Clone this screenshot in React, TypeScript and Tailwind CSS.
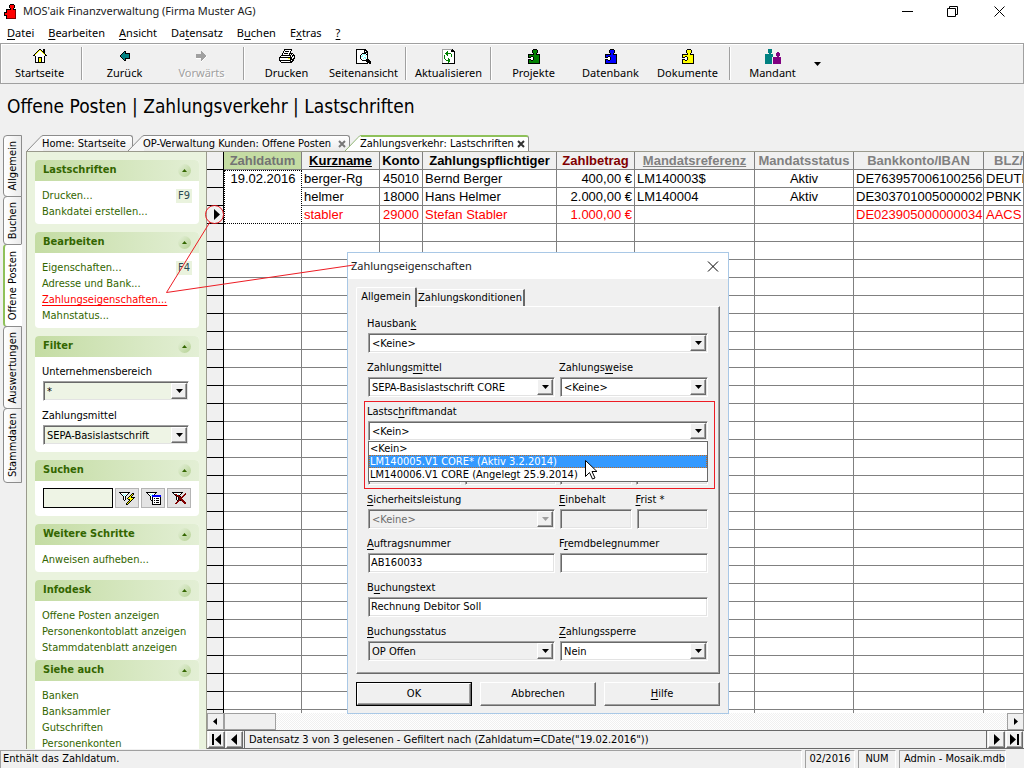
import React from 'react';

const sunken = 'border border-t-[#a0a0a0] border-l-[#a0a0a0] border-r-white border-b-white p-px shadow-[inset_1px_1px_0_#696969,inset_-1px_-1px_0_#e3e3e3]';
const raised = 'border border-t-white border-l-white border-r-[#696969] border-b-[#696969] bg-[#f0f0f0] shadow-[inset_-1px_-1px_0_#a0a0a0]';
const segoe = "font-['Noto_Sans','Open_Sans',sans-serif]";

const colors: Record<string, string> = {
    k: '#000000', w: '#ffffff', g: '#008000', b: '#0000ff', y: '#ffff00', r: '#ff0000', d: '#800000',
    t: '#008080', p: '#800080', c: '#7fffff', s: '#a0a0a0', n: '#000080',
};

function PixelIcon({ rows, fill }: { rows: string[]; fill?: string }) {
    return (
        <svg width={rows[0].length} height={rows.length} shapeRendering="crispEdges" aria-hidden="true" className="shrink-0">
            {rows.map((row, y) =>
                row.split('').map((c, x) =>
                    c === '.' ? null : <rect key={`${x}-${y}`} x={x} y={y} width="1" height="1" fill={c === 'x' ? fill : colors[c]} />
                )
            )}
        </svg>
    );
}

const puzzle = [
    '.....kkkk...',
    '....kxxxxk..',
    '....kxxxxk..',
    '....kxxxxk..',
    '.....kxxk...',
    'kkkkkkxxkkkk',
    'kxxxxxxxxxxk',
    'kxxkkxxxxxxk',
    'kkkwwkxxxxxk',
    '..wwwkxxxxxk',
    'kkkwwkxxxxxk',
    'kxxkkxxxxxxk',
    'kxxxxxxxxxxk',
    'kxxxxxxxxxxk',
    'kkkkkkkkkkkk',
];

const logo = [
    '......kkkk..',
    '.....krrrrk.',
    '.....krrrrk.',
    '.....krrrrk.',
    '......krrk..',
    '..kkkkkrrkkk',
    '..krrrrrrrrd',
    '..krrrrrrrrd',
    'kkkrrrrrrrrd',
    'krrrrrrrrrrd',
    'krrrrrrrrrrd',
    'kkkrrrrrrrrd',
    '..krrrrrrrrd',
    '..krrrrrrrrd',
    '..kddddddddd',
];

const house = [
    '......kk..kk..',
    '.....kyyk.kk..',
    '....kywwykkk..',
    '...kywwwwykk..',
    '..kywwwwwwyk..',
    '.kywwwwwwwwyk.',
    'kkwwwwwwwwwwkk',
    '..kwwwwwwwwk..',
    '..kwwkkkkwwk..',
    '..kwwkyykwwk..',
    '..kwwkyykwwk..',
    '..kwwkyykwwk..',
    '..kwwkyykwwk..',
    '..kkkkkkkkkk..',
];

const arrowLeft = [
    '....kk....',
    '...ktk....',
    '..kttkkkkk',
    '.ktttttttk',
    'kttttttttk',
    'kttttttttk',
    '.ktttttttk',
    '..kttkkkkk',
    '...ktk....',
    '....kk....',
];

const arrowRight = [
    '.....s.....',
    '.....ss....',
    '.....sss...',
    'sssssssss..',
    'ssssssssss.',
    'ssssssssssw',
    'sssssssssw.',
    'wwwwwsssw..',
    '.....ssw...',
    '.....sw....',
    '.....w.....',
];

const printer = [
    '.....kkkkkkkk...',
    '.....kwwwwwwk...',
    '....kwkkkkwk....',
    '....kwwwwwwk....',
    '...kwkkkkwkkkk..',
    '...kwwwwwwk.kwk.',
    '..kkkkkkkkkkwkkk',
    '.kwwwwwwwwwkwkwk',
    'kkkkkkkkkkkkkwwk',
    'kwwwwwwwwyykkwkk',
    'kwwwwwwwwwwkkkk.',
    'kkkkkkkkkkkkwkk.',
    '.kwwwwwwwwwkkk..',
    '..kkkkkkkkkkk...',
];

const preview = [
    'kkkkkkkkkk......',
    'kwwwwwwwkkk.....',
    'kwwwwwwwkwkk....',
    'kwwwwwwwkkkk....',
    'kwwwwwkkkkwk....',
    'kwwwwkwccwkk....',
    'kwwwkwcwwcwk....',
    'kwwwkccwwwwk....',
    'kwwwkwwwccwk....',
    'kwwwkwwcwcwk....',
    'kwwwwkwwwwkkk...',
    'kwwwwwkkkkkkkk..',
    'kwwwwwwwwwkkkkk.',
    'kwwwwwwwwwwkkkk.',
    'kkkkkkkkkkkk.kk.',
];

const refresh = [
    'ssssssssssk..',
    'swwwwwwwwkkk.',
    'swwwwgwwwkkkk',
    'swwwggwwwwwwk',
    'swwggggggwwwk',
    'swwwggwwwgwwk',
    'swgwwgwwwgwwk',
    'swgwwwwwwgwwk',
    'swgwwwwwwwwwk',
    'swgwwwgwwwwwk',
    'swwgwwggwwwwk',
    'swwwggggwwwwk',
    'swwwwwggwwwwk',
    'swwwwwgwwwwwk',
    'kkkkkkkkkkkkk',
];

const people = [
    '...tttt.........',
    '...tttt.........',
    '...tttt.........',
    '...tttt.....pp..',
    '....tt.....pppp.',
    'tttttttt...pppp.',
    'tttttttt...pppp.',
    'tttttttt....pp..',
    'ttttttt.pppppppp',
    'ttttttt.pppppppp',
    'ttttttt.pppppppp',
    'ttttttt.pppppppp',
    'ttttttt.pppppppp',
    'ttttttt.pppppppp',
    'ttttttt.pppppppp',
];

const filterRun = [
    'kkkkkkkkkkk.....',
    '.kwwwwwwwk...kk.',
    '..kwcwcwk...kyk.',
    '...kwcwk...kyk..',
    '....kwk...kyk...',
    '....kwk..kyykkkk',
    '....kwk.kyyyyyk.',
    '....kwk..kkyyk..',
    '.....k....kyk...',
    '.........kyk....',
    '........kyk.....',
    '.......kyk......',
    '.......kk.......',
];

const filterForm = [
    'kkkkkkkkkkk....',
    '.kwwwwwwwk.....',
    '..kwcwcwk......',
    '...kwcbbbbbbbbb',
    '....kwbbbbbbbbb',
    '....kwkwwwwwwwk',
    '....kwkwkwkkkwk',
    '....kwkwwwwwwwk',
    '.....kkwkwkkkwk',
    '......kwwwwwwwk',
    '......kwkwkkkwk',
    '......kwwwwwwwk',
    '......kkkkkkkkk',
];

const filterClear = [
    'kkkkkkkkkkk....',
    '.kwwwwwwwk...d.',
    '..kddwcwk...dd.',
    '...kdddk...dd..',
    '....kdddk.dd...',
    '....kwkdddd....',
    '....kwkddd.....',
    '....kwkdddd....',
    '.....kddkddd...',
    '.....dd...ddd..',
    '....dd.....ddd.',
    '...dd.......dd.',
];

/* '&' marks the access key of a caption */
function Caption({ text }: { text: string }) {
    const i = text.indexOf('&');
    if (i < 0) return <>{text}</>;
    return <>{text.slice(0, i)}<u className="underline-offset-2">{text[i + 1]}</u>{text.slice(i + 2)}</>;
}

interface FieldProps {
    id: string;
    label: string;
    value?: string;
    className?: string;
    tone?: string;
    disabled?: boolean;
    combo?: boolean;
}

function Field({ id, label, value = '', className = '', tone = 'bg-white', disabled, combo }: FieldProps) {
    return (
        <div className={`flex min-w-0 flex-col ${className}`}>
            <label htmlFor={id} className="h-[17px] leading-4 whitespace-nowrap"><Caption text={label} /></label>
            <div className={`ml-px flex h-5 ${sunken} ${disabled ? 'bg-[#f0f0f0] text-[#6d6d6d]' : tone}`}>
                {combo ? (
                    <>
                        <select id={id} disabled={disabled} defaultValue={value} className="min-w-0 flex-1 appearance-none bg-transparent pt-[2px] pl-[2px] leading-[14px] outline-none">
                            <option>{value}</option>
                        </select>
                        <span className={`pointer-events-none flex w-4 shrink-0 items-center justify-center ${raised}`}>
                            <svg width="7" height="4" aria-hidden="true"><path d="M0 0h7L3.5 4z" fill={disabled ? '#a0a0a0' : '#000'} /></svg>
                        </span>
                    </>
                ) : (
                    <input id={id} disabled={disabled} defaultValue={value} className="w-full min-w-0 bg-transparent px-px outline-none" />
                )}
            </div>
        </div>
    );
}

const menuItems = ['&Datei', '&Bearbeiten', '&Ansicht', 'Da&tensatz', 'B&uchen', 'E&xtras', '&?'];

interface Tool {
    label: string;
    rows: string[];
    fill?: string;
    disabled?: boolean;
}

const toolGroups: Tool[][] = [
    [{ label: 'Startseite', rows: house }],
    [{ label: 'Zurück', rows: arrowLeft }, { label: 'Vorwärts', rows: arrowRight, disabled: true }],
    [{ label: 'Drucken', rows: printer }, { label: 'Seitenansicht', rows: preview }],
    [{ label: 'Aktualisieren', rows: refresh }],
    [
        { label: 'Projekte', rows: puzzle, fill: '#008000' },
        { label: 'Datenbank', rows: puzzle, fill: '#0000ff' },
        { label: 'Dokumente', rows: puzzle, fill: '#ffff00' },
    ],
    [{ label: 'Mandant', rows: people }],
];

function Toolbar() {
    return (
        <div className={`flex h-[41px] shrink-0 items-stretch border border-[#a0a0a0] shadow-[inset_1px_1px_0_#fff] ${segoe}`}>
            {toolGroups.map((group, i) => (
                <React.Fragment key={i}>
                    {i > 0 && (
                        <div className="my-[3px] flex w-2 shrink-0 justify-center">
                            <span className="w-[2px] border-r border-l border-l-[#a0a0a0] border-r-white" />
                        </div>
                    )}
                    {group.map(tool => (
                        <button key={tool.label} disabled={tool.disabled} className="flex w-[77px] shrink-0 flex-col items-center pt-1 text-[11px] text-black disabled:text-[#a0a0a0] disabled:[text-shadow:1px_1px_0_#fff]">
                            <span className="flex h-4 items-center"><PixelIcon rows={tool.rows} fill={tool.fill} /></span>
                            <span className="leading-[18px]">{tool.label}</span>
                        </button>
                    ))}
                </React.Fragment>
            ))}
            <button aria-label="Mandant wählen" className="flex w-3 items-center justify-center">
                <svg width="7" height="4"><path d="M0 0h7L3.5 4z" /></svg>
            </button>
        </div>
    );
}

function TitleBar() {
    return (
        <header className="flex h-[23px] shrink-0 items-center bg-white pl-1">
            <PixelIcon rows={logo} />
            <h1 className={`ml-[7px] text-[11px] text-[#222] ${segoe}`}>MOS'aik Finanzverwaltung (Firma Muster AG)</h1>
            <div className="ml-auto flex h-full items-center pb-px">
                <button aria-label="Minimieren" className="flex w-[45px] justify-center"><svg width="11" height="11"><path d="M0 5.5h11" stroke="#000" /></svg></button>
                <button aria-label="Wiederherstellen" className="flex w-[45px] justify-center">
                    <svg width="11" height="11" fill="none" stroke="#000"><path d="M.5 2.5h8v8h-8zM2.5 2.5v-2h8v8h-2" /></svg>
                </button>
                <button aria-label="Schließen" className="flex w-[49px] justify-center"><svg width="11" height="11"><path d="M.5.5l10 10M10.5.5l-10 10" stroke="#000" /></svg></button>
            </div>
        </header>
    );
}

const sideTabs = [
    { label: 'Allgemein', size: 'h-[62px]' },
    { label: 'Buchen', size: 'h-[49px]' },
    { label: 'Offene Posten', size: 'h-[83px]', active: true },
    { label: 'Auswertungen', size: 'h-[83px]' },
    { label: 'Stammdaten', size: 'h-[75px]' },
];

function SideTabs() {
    return (
        <nav className="flex w-[26px] shrink-0 flex-col pl-[3px]">
            {sideTabs.map(tab => (
                <button
                    key={tab.label}
                    className={`-mb-px flex w-[19px] items-center justify-center rounded-l-[4px] border border-[#8c8c8c] ${tab.size} ${tab.active ? 'border-l-2 border-l-[#8fc15a] border-r-white bg-white' : 'bg-linear-to-r from-white to-[#ebebeb]'}`}
                >
                    <span className="rotate-180 text-[11px] leading-4 whitespace-nowrap [writing-mode:vertical-rl]">{tab.label}</span>
                </button>
            ))}
        </nav>
    );
}

const pageTabs = [
    { label: 'Home: Startseite', size: 'w-[90px]' },
    { label: 'OP-Verwaltung Kunden: Offene Posten', size: 'w-[206px]', closable: true },
    { label: 'Zahlungsverkehr: Lastschriften', size: 'w-[168px]', closable: true, active: true },
];

function PageTabs() {
    return (
        <nav className="flex h-4 shrink-0 items-end pl-px">
            {pageTabs.map((tab, i) => (
                <button key={tab.label} className={`flex h-4 text-left whitespace-nowrap ${i > 0 ? '-ml-[5px]' : ''}`}>
                    <svg width="16" height="16" className="shrink-0">
                        <path d="M0 16L13 2.5Q14.5 .5 16 .5V16z" fill={tab.active ? '#fff' : '#f6f6f6'} />
                        <path d="M0 16L13 2.5Q14.5 .5 16 .5" fill="none" stroke={tab.active ? '#8fb573' : '#8c8c8c'} />
                    </svg>
                    <span className={`flex h-4 items-center rounded-tr-[3px] border-t border-r border-r-[#8c8c8c] ${tab.size} ${tab.active ? 'border-t-2 border-t-[#8fc15a] bg-white' : 'border-t-[#8c8c8c] bg-linear-to-b from-white to-[#ebebeb]'}`}>
                        <span className="-ml-px leading-[14px]">{tab.label}</span>
                        {tab.closable && (
                            <svg width="8" height="8" className="ml-auto mr-[3px] shrink-0">
                                <path d="M1 1l6 6M7 1l-6 6" stroke={tab.active ? '#333' : '#777'} strokeWidth="2" />
                            </svg>
                        )}
                    </span>
                </button>
            ))}
        </nav>
    );
}

function Panel({ title, children, className = 'mb-2' }: { title: string; children: React.ReactNode; className?: string }) {
    return (
        <section className={`shrink-0 overflow-hidden rounded-[4px] bg-white ${className}`}>
            <h3 className="flex h-[21px] items-center bg-linear-to-r from-[#c4dca3] to-[#e3efd5] pr-2 pl-2 text-[11px] font-bold text-[#336600]">
                {title}
                <button aria-label={`${title} einklappen`} className="ml-auto flex h-[13px] w-[13px] items-center justify-center rounded-full bg-linear-to-br from-[#e6f1da] to-[#b5d193]">
                    <svg width="5" height="3"><path d="M0 3h5L2.5 0z" fill="#336600" /></svg>
                </button>
            </h3>
            <div className="px-[7px]">{children}</div>
        </section>
    );
}

function LinkList({ items }: { items: { label: string; hint?: string; marked?: boolean }[] }) {
    return (
        <ul className="pt-[7px] pb-1">
            {items.map(item => (
                <li key={item.label} className="flex h-4 items-center justify-between">
                    <a href="#" className={`leading-4 whitespace-nowrap ${item.marked ? 'text-[#ff0000] underline underline-offset-2' : 'text-[#336600]'}`}>{item.label}</a>
                    {item.hint && <kbd className="bg-[#eaf3de] px-[2px] font-[inherit] leading-[14px] text-[#2b4a52]">{item.hint}</kbd>}
                </li>
            ))}
        </ul>
    );
}

function Sidebar() {
    return (
        <aside className="flex w-[181px] shrink-0 flex-col overflow-hidden border-t border-r border-l border-[#9a9a8c] bg-[#eaf3de] pt-2 pr-[7px] pl-2">
            <Panel title="Lastschriften"><LinkList items={[{ label: 'Drucken...', hint: 'F9' }, { label: 'Bankdatei erstellen...' }]} /></Panel>
            <Panel title="Bearbeiten">
                <LinkList
                    items={[
                        { label: 'Eigenschaften...', hint: 'F4' },
                        { label: 'Adresse und Bank...' },
                        { label: 'Zahlungseigenschaften...', marked: true },
                        { label: 'Mahnstatus...' },
                    ]}
                />
            </Panel>
            <Panel title="Filter">
                <div className="flex flex-col gap-[7px] py-[7px] pr-[3px]">
                    <Field id="bereich" label="Unternehmensbereich" value="*" combo tone="bg-[#eef4e5]" />
                    <Field id="filtermittel" label="Zahlungsmittel" value="SEPA-Basislastschrift" combo tone="bg-[#eef4e5]" />
                </div>
            </Panel>
            <Panel title="Suchen">
                <div className="flex gap-[2px] pt-[7px] pb-2 pl-px">
                    <input aria-label="Suchbegriff" className="h-5 w-[70px] border border-black bg-[#eef4e5] px-1" />
                    {[['Suche starten', filterRun], ['Suche bearbeiten', filterForm], ['Suche löschen', filterClear]].map(([name, rows]) => (
                        <button key={name as string} aria-label={name as string} className="flex h-5 w-6 items-center justify-center border border-[#b4b4b4] bg-[#e3e3e3]">
                            <PixelIcon rows={rows as string[]} />
                        </button>
                    ))}
                </div>
            </Panel>
            <Panel title="Weitere Schritte"><LinkList items={[{ label: 'Anweisen aufheben...' }]} /></Panel>
            <Panel title="Infodesk" className="">
                <LinkList items={[{ label: 'Offene Posten anzeigen' }, { label: 'Personenkontoblatt anzeigen' }, { label: 'Stammdatenblatt anzeigen' }]} />
            </Panel>
            <Panel title="Siehe auch">
                <LinkList items={[{ label: 'Banken' }, { label: 'Banksammler' }, { label: 'Gutschriften' }, { label: 'Personenkonten' }]} />
            </Panel>
        </aside>
    );
}

const columns = [
    { title: 'Zahldatum', width: 'w-[78px]', style: 'bg-[#c4dca3] text-[#737373]' },
    { title: 'Kurzname', width: 'w-[78px]', style: 'bg-[#f0f0f0] underline' },
    { title: 'Konto', width: 'w-[43px]', style: 'bg-[#f0f0f0]' },
    { title: 'Zahlungspflichtiger', width: 'w-[134px]', style: 'bg-[#f0f0f0]' },
    { title: 'Zahlbetrag', width: 'w-[78px]', style: 'bg-[#f0f0f0] text-[#800000]' },
    { title: 'Mandatsreferenz', width: 'w-[120px]', style: 'bg-[#f0f0f0] text-[#808080] underline' },
    { title: 'Mandatsstatus', width: 'w-[99px]', style: 'bg-[#f0f0f0] text-[#808080]' },
    { title: 'Bankkonto/IBAN', width: 'w-[130px]', style: 'bg-[#f0f0f0] text-[#808080]' },
    { title: 'BLZ/', width: '', style: 'bg-[#f0f0f0] pr-0 text-right text-[#808080]' },
];

const records = [
    ['berger-Rg', '45010', 'Bernd Berger', '400,00 €', 'LM140003$', 'Aktiv', 'DE763957006100256', 'DEUTD'],
    ['helmer', '18000', 'Hans Helmer', '2.000,00 €', 'LM140004', 'Aktiv', 'DE303701005000002', 'PBNK'],
    ['stabler', '29000', 'Stefan Stabler', '1.000,00 €', '', '', 'DE023905000000034', 'AACS'],
];

const cellAlign = ['text-left', 'text-center', 'text-left', 'text-right', 'text-left', 'text-center', 'text-left', 'text-left'];

function DataGrid() {
    return (
        <div className="min-h-0 flex-1 overflow-hidden bg-white">
            <table className="w-full table-fixed border-separate border-spacing-0 font-['Liberation_Sans',Arial,sans-serif] text-[13px] leading-[17px] [&_td]:overflow-hidden [&_td]:whitespace-nowrap [&_th]:overflow-hidden [&_th]:whitespace-nowrap">
                <thead>
                    <tr className="h-[18px]">
                        <th aria-label="Auswahl" className="w-[17px] border-r border-b border-black bg-[#f0f0f0] p-0" />
                        {columns.map(c => (
                            <th key={c.title} className={`border-r border-b border-[#808080] p-0 ${c.width} ${c.style}`}>{c.title}</th>
                        ))}
                    </tr>
                </thead>
                <tbody>
                    {records.map((row, i) => (
                        <tr key={row[0]} className={`h-[18px] ${i === 2 ? 'text-[#ff0000]' : 'text-black'}`}>
                            <td className="border-r border-b border-black bg-[#f0f0f0] p-0">
                                {i === 2 && <svg width="16" height="11" className="block"><path d="M7 0v11l6-5.5z" /></svg>}
                            </td>
                            {i === 0 && <td rowSpan={3} className="border border-dotted border-black p-0 text-center align-top leading-[15px]">19.02.2016</td>}
                            {row.map((cell, j) => (
                                <td key={j} className={`border-r border-b border-[#808080] px-[2px] py-0 ${cellAlign[j]}`}>{cell}</td>
                            ))}
                        </tr>
                    ))}
                    {Array.from({ length: 28 }, (_, i) => (
                        <tr key={i} className="h-[18px]">
                            <td className="border-r border-b border-black bg-[#f0f0f0] p-0" />
                            {columns.map(c => <td key={c.title} className="border-r border-b border-[#808080] p-0" />)}
                        </tr>
                    ))}
                </tbody>
            </table>
        </div>
    );
}

function NavButton({ name, d }: { name: string; d: string }) {
    return (
        <button aria-label={name} className={`flex h-[17px] w-[17px] shrink-0 items-center justify-center ${raised}`}>
            <svg width="11" height="11"><path d={d} /></svg>
        </button>
    );
}

function GridFooter() {
    return (
        <>
            <div className="flex h-[17px] shrink-0 bg-[repeating-conic-gradient(#ffffff_0_25%,#f0f0f0_0_50%)] bg-size-[2px_2px]">
                <button aria-label="Nach links" className="flex w-[17px] items-center justify-center border border-[#a0a0a0] bg-[#f0f0f0]"><svg width="5" height="7"><path d="M4 0v7L0 3.5z" /></svg></button>
                <div className="w-[52px] border border-[#a0a0a0] bg-[#f0f0f0]" />
                <button aria-label="Nach rechts" className="ml-auto flex w-[17px] items-center justify-center border border-[#a0a0a0] bg-[#f0f0f0]"><svg width="5" height="7"><path d="M1 0v7l4-3.5z" /></svg></button>
            </div>
            <div className="flex h-[19px] shrink-0 items-center gap-px border-t border-b border-[#696969] px-px">
                <NavButton name="Erster" d="M1 0h2v11H1zM10 0v11L4 5.5z" />
                <NavButton name="Vorheriger" d="M8 0v11L2 5.5z" />
                <span className="h-full border-l border-[#696969] pl-1 leading-[17px]">Datensatz 3 von 3 gelesenen - Gefiltert nach (Zahldatum=CDate("19.02.2016"))</span>
                <span className="ml-auto h-full border-l border-[#696969]" />
                <NavButton name="Nächster" d="M3 0v11l6-5.5z" />
                <NavButton name="Letzter" d="M8 0h2v11H8zM1 0v11l6-5.5z" />
            </div>
        </>
    );
}

const mandates = ['<Kein>', 'LM140005.V1 CORE* (Aktiv 3.2.2014)', 'LM140006.V1 CORE (Angelegt 25.9.2014)'];

function PaymentDialog() {
    return (
        <div role="dialog" aria-labelledby="dialog-title" className="absolute top-[252px] left-[347px] w-[382px] border border-[#a9c8e6] bg-[#f0f0f0] pb-[7px]">
            <div className="flex h-[26px] items-center justify-between bg-white pr-[9px] pl-[3px]">
                <h2 id="dialog-title" className={`text-[11px] text-[#222] ${segoe}`}>Zahlungseigenschaften</h2>
                <button aria-label="Schließen"><svg width="12" height="11" className="block"><path d="M1 .5l10 10M11 .5l-10 10" stroke="#000" /></svg></button>
            </div>
            <div className="px-2 pt-2">
                <div role="tablist" className="flex items-end">
                    <button role="tab" aria-selected="true" className="relative -mb-px h-5 w-[61px] rounded-t-[2px] border-t border-r-2 border-l border-t-white border-r-[#696969] border-l-white bg-[#f0f0f0] pb-px">Allgemein</button>
                    <button role="tab" aria-selected="false" className="h-[17px] w-[108px] border-t border-r-2 border-t-white border-r-[#696969]">Zahlungskonditionen</button>
                </div>
                <div className={`flex flex-col gap-[7px] pt-[9px] pr-[11px] pb-[12px] pl-[10px] ${raised}`}>
                    <Field id="hausbank" label="Hausban&k" value="<Keine>" combo />
                    <div className="flex gap-1">
                        <Field id="mittel" label="Zahlungs&mittel" value="SEPA-Basislastschrift CORE" combo className="w-[188px]" />
                        <Field id="weise" label="Zahlungs&weise" value="<Keine>" combo className="flex-1" />
                    </div>
                    <div className="relative">
                        <div className="pointer-events-none absolute -top-[3px] -right-[7px] -left-[3px] h-[88px] border border-[#ed1c24]" />
                        <Field id="mandat" label="Lastsc&hriftmandat" value="<Kein>" combo />
                        <ul role="listbox" aria-label="Lastschriftmandate" className="absolute top-[37px] right-0 left-px z-10 border border-[#696969] bg-white">
                            {mandates.map((m, i) => (
                                <li key={m} role="option" aria-selected={i === 1} className={`h-[13px] pl-px leading-[13px] ${i === 1 ? 'bg-[#3399ff] text-white outline-1 -outline-offset-1 outline-[#c06a20] outline-dotted' : ''}`}>{m}</li>
                            ))}
                        </ul>
                        <svg width="14" height="22" className="absolute top-[55px] left-[217px] z-20">
                            <path d="M1.5 1.5v16l4-4 3 6.5 2.5-1-3-6.5h5z" fill="#fff" stroke="#000" />
                        </svg>
                    </div>
                    <div className="flex items-end gap-1 pt-[17px] pl-px">
                        {['w-[93px]', 'w-[91px]', 'w-[72px]', 'w-[72px]'].map((w, i) => <span key={i} className={`h-5 ${w} ${sunken}`} />)}
                    </div>
                    <div className="flex gap-1">
                        <Field id="sicherheit" label="&Sicherheitsleistung" value="<Keine>" combo disabled className="w-[188px]" />
                        <Field id="einbehalt" label="&Einbehalt" disabled className="flex-1" />
                        <Field id="frist" label="&Frist *" disabled className="flex-1" />
                    </div>
                    <div className="flex gap-1">
                        <Field id="auftrag" label="&Auftragsnummer" value="AB160033" className="w-[188px]" />
                        <Field id="fremdbeleg" label="F&remdbelegnummer" className="flex-1" />
                    </div>
                    <Field id="text" label="B&uchungstext" value="Rechnung Debitor Soll" />
                    <div className="flex gap-1">
                        <Field id="status" label="&Buchungsstatus" value="OP Offen" combo tone="bg-[#f0f0f0]" className="w-[188px]" />
                        <Field id="sperre" label="&Zahlungssperre" value="Nein" combo className="flex-1" />
                    </div>
                </div>
                <div className="mt-2 flex gap-2">
                    <div className="flex-1 border border-black"><button className={`h-[22px] w-full ${raised}`}>OK</button></div>
                    <button className={`h-6 flex-1 ${raised}`}>Abbrechen</button>
                    <button className={`h-6 flex-1 ${raised}`}><Caption text="&Hilfe" /></button>
                </div>
            </div>
        </div>
    );
}

function StatusBar() {
    const cell = 'border-t border-l border-t-[#a0a0a0] border-l-[#a0a0a0] border-r border-r-white leading-4 whitespace-nowrap';
    return (
        <footer className="flex h-[19px] shrink-0 gap-[3px] pt-px pr-[18px]">
            <div className={`flex-1 pl-[2px] ${cell}`}>Enthält das Zahldatum.</div>
            <div className={`w-[50px] text-center ${cell}`}>02/2016</div>
            <div className={`w-[38px] text-center ${cell}`}>NUM</div>
            <div className={`w-[107px] pl-1 ${cell}`}>Admin - Mosaik.mdb</div>
        </footer>
    );
}

export default function App() {
    return (
        <div className="relative flex h-screen flex-col overflow-hidden bg-[#f0f0f0] font-['DejaVu_Sans_Condensed','Noto_Sans',sans-serif] text-[11px] text-black">
            <TitleBar />
            <nav className={`flex h-5 shrink-0 items-center gap-[14px] bg-white pl-[7px] text-[11px] ${segoe}`}>
                {menuItems.map(item => <button key={item}><Caption text={item} /></button>)}
            </nav>
            <Toolbar />
            <h2 className="shrink-0 pt-[10px] pl-[7px] text-[19px] leading-6">Offene Posten | Zahlungsverkehr | Lastschriften</h2>
            <main className="mt-[17px] flex min-h-0 flex-1">
                <SideTabs />
                <div className="flex min-w-0 flex-1 flex-col">
                    <PageTabs />
                    <div className="flex min-h-0 flex-1">
                        <Sidebar />
                        <div className="flex min-w-0 flex-1 flex-col border-t border-[#9a9a8c]">
                            <DataGrid />
                            <GridFooter />
                        </div>
                    </div>
                </div>
            </main>
            <StatusBar />
            <PaymentDialog />
            <svg width="360" height="300" className="pointer-events-none absolute top-0 left-0" fill="none" stroke="#ed1c24">
                <circle cx="214.5" cy="214.5" r="9" />
                <path d="M210 222L166.5 292.500L354 265" />
            </svg>
        </div>
    );
}
